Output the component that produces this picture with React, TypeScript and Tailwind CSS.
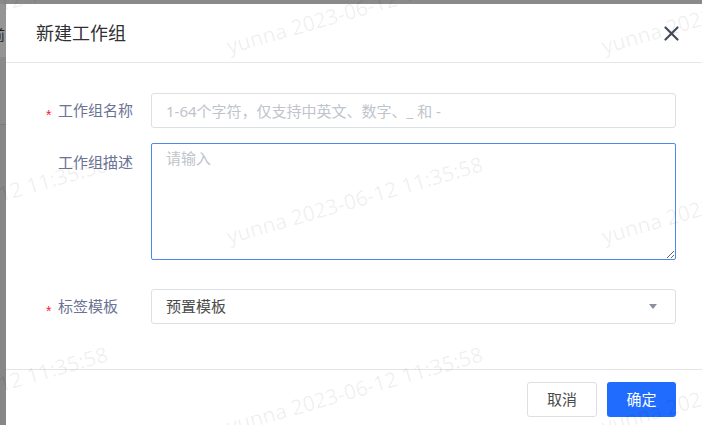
import React from 'react';

const WATERMARK = 'yunna 2023-06-12 11:35:58';

// tiled user watermark: left/top of each text run's baseline start
const marks: { x: number; y: number }[] = [];
[55, 245, 435].forEach((y) => {
  [-145, 230, 605].forEach((x) => marks.push({ x, y }));
});

const Watermarks: React.FC = () => (
  <div className="pointer-events-none absolute inset-0 overflow-hidden">
    {marks.map((m, i) => (
      <span
        key={i}
        className="absolute whitespace-nowrap text-[21px] leading-[21px] text-black/[0.065] origin-bottom-left -rotate-[16deg] font-['Noto_Sans',sans-serif]"
        style={{ left: m.x, top: m.y - 19 }}
      >
        {WATERMARK}
      </span>
    ))}
  </div>
);

const FormLabel: React.FC<{ required?: boolean; children: React.ReactNode; className?: string }> = ({
  required,
  children,
  className = '',
}) => (
  <label className={`w-[115px] shrink-0 pl-[10px] flex text-[#6b7293] ${className}`}>
    <span className="w-[12px] shrink-0 text-[14px] leading-none text-[#f5222d] font-['Liberation_Sans',sans-serif] translate-y-[4px]">
      {required ? '*' : ''}
    </span>
    {children}
  </label>
);

export default function App() {
  return (
    <div className="relative w-[702px] h-[425px] overflow-hidden bg-[#8a8a8a] font-['Noto_Sans','Noto_Sans_CJK_SC',sans-serif]">
      <div className="flex h-full pt-[4px]">
        {/* page behind the mask */}
        <div className="w-[6px] shrink-0 overflow-hidden flex flex-col">
          <div className="h-[53px] bg-[#959595] pt-[22px]">
            <span className="block -ml-[9px] text-[14px] leading-[16px] text-[#1e1e1e] font-['Noto_Sans_CJK_SC',sans-serif]">前</span>
          </div>
          <div className="h-[68px] bg-[#8a8a8a] border-b border-[#7b7b7b]" />
          <div className="flex-1 bg-[#878787]" />
        </div>

        {/* dialog */}
        <div className="w-[700px] shrink-0 bg-white flex flex-col">
          <div className="h-[59px] px-[30px] flex items-center justify-between border-b border-[#e6e7eb]">
            <span className="text-[18px] text-[#303133]">新建工作组</span>
            <svg className="-mr-[3px]" width="15" height="15" viewBox="0 0 15 15" fill="none">
              <path d="M1.5 1.5l12 12M13.5 1.5l-12 12" stroke="#464c5b" strokeWidth="2.2" strokeLinecap="round" />
            </svg>
          </div>

          <div className="px-[30px] pt-[30px] pb-[45px] text-[15px]">
            <div className="flex items-center">
              <FormLabel required className="items-center">工作组名称</FormLabel>
              <input
                className="flex-1 h-[35px] border border-[#dcdfe6] rounded-[3px] px-[14px] text-[15px] text-[#333] outline-none placeholder:text-[#c0c4cc]"
                placeholder="1-64个字符，仅支持中英文、数字、_ 和 -"
              />
            </div>

            <div className="flex items-start mt-[15px]">
              <FormLabel className="pt-[8px] leading-[22px]">工作组描述</FormLabel>
              <textarea
                className="flex-1 h-[117px] border border-[#4f87ee] rounded-[2px] px-[14px] py-[3px] leading-[22px] text-[15px] outline-none placeholder:text-[#c0c4cc]"
                placeholder="请输入"
              />
            </div>

            <div className="flex items-center mt-[29px]">
              <FormLabel required className="items-center">标签模板</FormLabel>
              <div className="flex-1 h-[35px] border border-[#dcdfe6] rounded-[3px] pl-[14px] pr-[18px] flex items-center justify-between">
                <span className="text-[#4a4a4a]">预置模板</span>
                <svg width="8" height="5" viewBox="0 0 8 5">
                  <path d="M0 0h8L4 5z" fill="#8a8f9c" />
                </svg>
              </div>
            </div>
          </div>

          <div className="border-t border-[#e4e4e7] pt-[12px] px-[30px] flex justify-end gap-[10px]">
            <button className="w-[70px] h-[35px] border border-[#dcdfe6] rounded-[3px] bg-white text-[15px] text-[#4a4a4a]">取消</button>
            <button className="w-[69px] h-[35px] rounded-[3px] bg-[#1f6cff] text-[15px] text-white">确定</button>
          </div>
        </div>
      </div>
      <Watermarks />
    </div>
  );
}
